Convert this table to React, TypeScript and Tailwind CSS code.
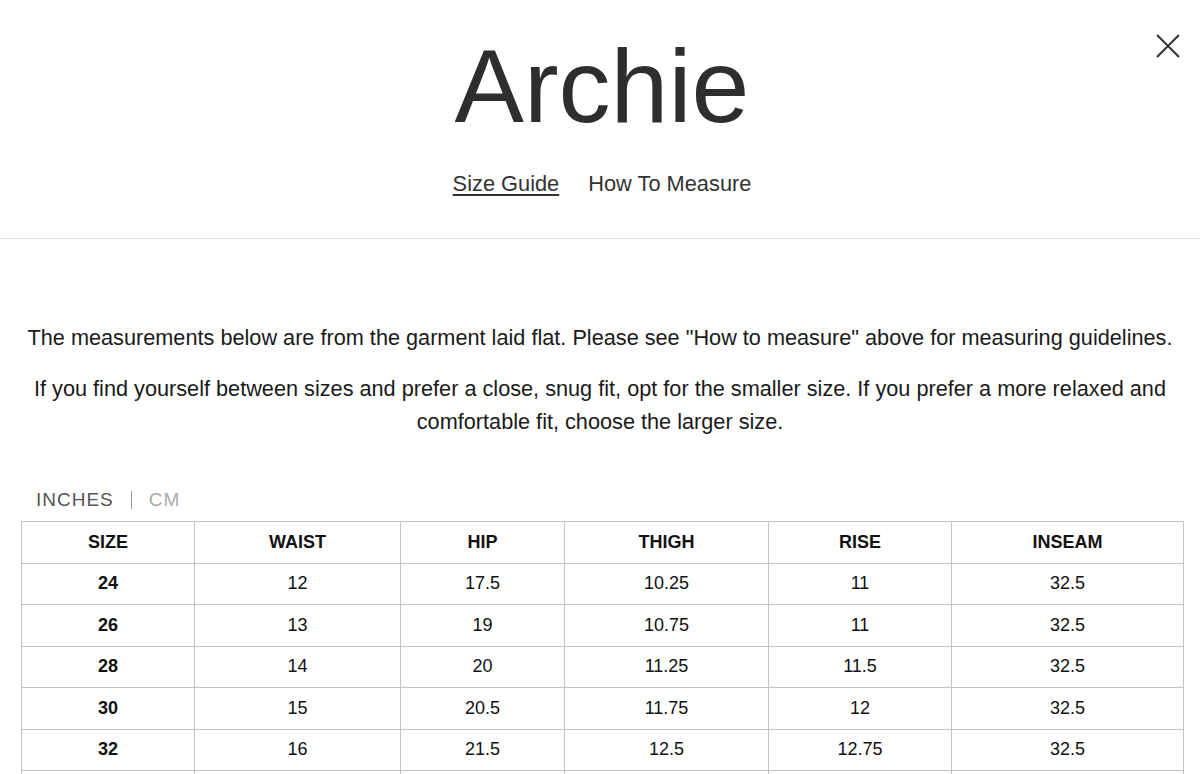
import React, { useState } from 'react';

const rows = [
  { size: '24', waist: '12', hip: '17.5', thigh: '10.25', rise: '11', inseam: '32.5' },
  { size: '26', waist: '13', hip: '19', thigh: '10.75', rise: '11', inseam: '32.5' },
  { size: '28', waist: '14', hip: '20', thigh: '11.25', rise: '11.5', inseam: '32.5' },
  { size: '30', waist: '15', hip: '20.5', thigh: '11.75', rise: '12', inseam: '32.5' },
  { size: '32', waist: '16', hip: '21.5', thigh: '12.5', rise: '12.75', inseam: '32.5' },
  { size: '34', waist: '17', hip: '22.5', thigh: '13', rise: '13', inseam: '32.5' },
];

const headers = ['SIZE', 'WAIST', 'HIP', 'THIGH', 'RISE', 'INSEAM'];

export default function App() {
  const [tab, setTab] = useState<'guide' | 'measure'>('guide');
  const [unit, setUnit] = useState<'in' | 'cm'>('in');

  return (
    <div className="relative min-h-screen bg-white text-[#111]" style={{ fontFamily: '"Liberation Sans", Arial, sans-serif' }}>
      <button className="absolute right-[20px] top-[34px] w-[24px] h-[24px] text-[#333]" aria-label="Close">
        <svg viewBox="0 0 24 24" width="24" height="24" fill="none" stroke="currentColor" strokeWidth="2">
          <path d="M1 1L23 23M23 1L1 23" />
        </svg>
      </button>

      <div className="flex flex-col items-center pt-[34px] border-b border-[#e0e0e0] pb-[42px]">
        <h1 className="text-[104px] leading-[104px] text-[#2e2e2e] ml-[4px]">Archie</h1>
        <div className="flex gap-[29px] mt-[34px] ml-[4px] text-[21.8px] leading-[24px] text-[#333]">
          <button onClick={() => setTab('guide')} className={tab === 'guide' ? 'underline underline-offset-[3px]' : ''}>
            Size Guide
          </button>
          <button onClick={() => setTab('measure')} className={tab === 'measure' ? 'underline underline-offset-[3px]' : ''}>
            How To Measure
          </button>
        </div>
      </div>

      <div className="pt-[82px] text-center text-[21.7px] leading-[33px] text-[#1a1a1a] px-[20px]">
        <p>The measurements below are from the garment laid flat. Please see "How to measure" above for measuring guidelines.</p>
        <p className="mt-[18px]">
          If you find yourself between sizes and prefer a close, snug fit, opt for the smaller size. If you prefer a more relaxed and comfortable fit, choose the larger size.
        </p>
      </div>

      <div className="pl-[21px] pt-[51px]">
        <div className="flex items-center ml-[15px] text-[19px] leading-[22px] tracking-[1px]">
          <button onClick={() => setUnit('in')} className={unit === 'in' ? 'text-[#555]' : 'text-[#aaa]'}>INCHES</button>
          <span className="mx-[17px] h-[18px] border-l border-[#999]" />
          <button onClick={() => setUnit('cm')} className={unit === 'cm' ? 'text-[#555]' : 'text-[#aaa]'}>CM</button>
        </div>

        <table className="mt-[10px] w-[1162px] border-collapse table-fixed text-[18px] text-center">
          <colgroup>
            <col className="w-[173px]" />
            <col className="w-[206px]" />
            <col className="w-[164px]" />
            <col className="w-[204px]" />
            <col className="w-[183px]" />
            <col className="w-[232px]" />
          </colgroup>
          <thead>
            <tr>
              {headers.map((h) => (
                <th key={h} className="h-[41.5px] border border-[#c4c4c4] font-bold p-0">{h}</th>
              ))}
            </tr>
          </thead>
          <tbody>
            {rows.map((r) => (
              <tr key={r.size}>
                <td className="h-[41.5px] border border-[#c4c4c4] font-bold p-0">{r.size}</td>
                <td className="border border-[#c4c4c4] p-0">{r.waist}</td>
                <td className="border border-[#c4c4c4] p-0">{r.hip}</td>
                <td className="border border-[#c4c4c4] p-0">{r.thigh}</td>
                <td className="border border-[#c4c4c4] p-0">{r.rise}</td>
                <td className="border border-[#c4c4c4] p-0">{r.inseam}</td>
              </tr>
            ))}
          </tbody>
        </table>
      </div>
    </div>
  );
}
